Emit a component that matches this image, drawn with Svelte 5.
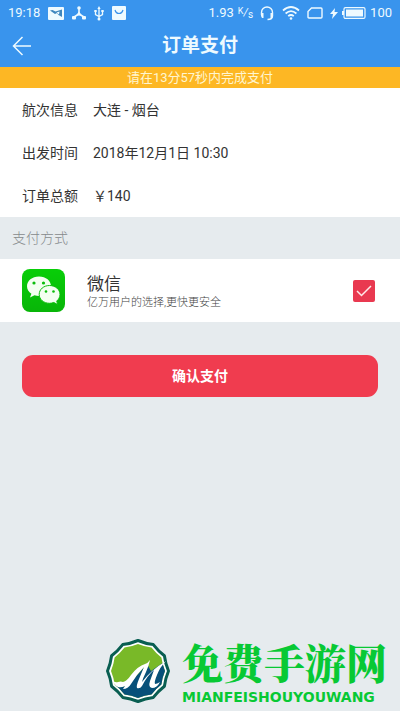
<script>
  const details = [
    { label: '航次信息', value: '大连 - 烟台' },
    { label: '出发时间', value: '2018年12月1日 10:30' },
    { label: '订单总额', value: '￥140' }
  ];
  let wechat = $state(true);

  // Twelve-sided badge whose sides bend slightly inwards.
  function badge(radius) {
    const point = (step, r) => {
      const angle = (step * Math.PI) / 6;
      return `${(33 + r * Math.sin(angle)).toFixed(1)} ${(32 - r * Math.cos(angle)).toFixed(1)}`;
    };
    let path = `M${point(0, radius)}`;
    for (let i = 1; i <= 12; i++) path += `Q${point(i - 0.5, radius * 0.93)} ${point(i, radius)}`;
    return path + 'Z';
  }
</script>

<div class="screen">
  <header>
    <div class="status">
      <div class="group left">
        <span>19:18</span>
        <svg width="16" height="13" viewBox="0 0 16 13"><rect width="16" height="13" rx="1" fill="#eefaff"/><path d="M2 3.500 4.500 3l3 1.500L14 2.500v7.500L10.500 8 9 6 7 7Z" fill="#3e86bd"/><path d="m8.500 5.500 3-1-.5 3Z" fill="#eefaff"/></svg>
        <svg width="14" height="14" viewBox="0 0 14 14" fill="none" stroke="#eefaff" stroke-width="1.6"><path d="M7 2v6L2 11M7 8l5 3"/><g fill="#eefaff" stroke="none"><circle cx="7" cy="2" r="1.800"/><rect y="10" width="4" height="3.500" rx="1"/><rect x="10" y="10" width="4" height="3.500" rx="1"/><path d="m7 5.500 3 4H4Z"/></g></svg>
        <svg width="10" height="15" viewBox="0 0 10 15" fill="none" stroke="#eefaff" stroke-width="1.3"><path d="M5 2v11M1.500 5v3.500L5 10.500l3.500-2V5"/><path d="M3.400 3 5 0l1.600 3ZM.3 4h2.400v2H.3ZM7.300 4h2.400v2H7.300Z" fill="#eefaff" stroke="none"/><circle cx="5" cy="13" r="1.500" fill="#eefaff" stroke="none"/></svg>
        <svg width="14" height="14" viewBox="0 0 14 14"><rect width="14" height="14" rx="1" fill="#eefaff"/><path d="M3 4q1 3.500 4 3.500T11 4" fill="none" stroke="#3992ea" stroke-width="1.2"/></svg>
      </div>
      <div class="group right">
        <span>1.93</span>
        <span class="unit"><sup>K</sup><i>/</i><sub>s</sub></span>
        <svg class="headset" width="14" height="15" viewBox="0 0 14 15" fill="none" stroke="#eefaff" stroke-width="1.4"><path d="M1.500 9V6.500a5.500 5.500 0 0 1 11 0V10q0 3.500-5 3.500"/><path d="M1 7h2.500v5H2L1 10ZM10.500 7H13v3l-1 2h-1.500Z" fill="#eefaff" stroke="none"/></svg>
        <svg class="wifi" width="18" height="14" viewBox="0 0 18 14" fill="none" stroke="#eefaff" stroke-width="1.7"><path d="M1 4.500q8-7 16 0M3.600 7.500q5.400-4.700 10.800 0M6.200 10.200q2.800-2.400 5.600 0"/><circle cx="9" cy="12.500" r="1.300" fill="#eefaff" stroke="none"/></svg>
        <svg class="sim" width="16" height="12" viewBox="0 0 16 12" fill="none" stroke="#eefaff" stroke-width="1.4"><path d="M4.500 1H14q1 0 1 1v8q0 1-1 1H2q-1 0-1-1V4.500Z"/></svg>
        <svg width="8" height="11" viewBox="0 0 8 11" fill="#eefaff"><path d="M5 0 0 6h3L2 11l6-7H4.500Z"/></svg>
        <svg width="24" height="12" viewBox="0 0 24 12"><path d="M0 4h2v4H0Z" fill="#eefaff"/><rect x="2" y=".6" width="21" height="10.800" rx="1.500" fill="none" stroke="#eefaff" stroke-width="1.200"/><rect x="4" y="2.500" width="17" height="7" fill="#eefaff"/></svg>
        <span>100</span>
      </div>
    </div>
    <nav>
      <button class="back" type="button" aria-label="返回">
        <svg width="20" height="20" viewBox="0 0 20 20" fill="none" stroke="#eefaff" stroke-width="1.5"><path d="M10.500 1 1.500 10l9 9M1.500 10H19"/></svg>
      </button>
      <h1>订单支付</h1>
    </nav>
  </header>
  <p class="timer">请在13分57秒内完成支付</p>
  <main>
    <dl>
      {#each details as item}
        <div class="row"><dt>{item.label}</dt><dd>{item.value}</dd></div>
      {/each}
    </dl>
    <h2>支付方式</h2>
    <label class="method">
      <svg width="43" height="43" viewBox="0 0 43 43">
        <defs><linearGradient id="green" x2="0" y2="1"><stop stop-color="#08ce08"/><stop offset="1" stop-color="#08b508"/></linearGradient></defs>
        <rect width="43" height="43" rx="8" fill="url(#green)"/>
        <path d="M17 7.500c-7 0-12 4.300-12 9.800 0 3.200 1.700 5.700 4.400 7.500L8 28.500l4.500-2.300q2.200.7 4.500.7c7 0 12-4.200 12-9.600S24 7.500 17 7.500Z" fill="#f4fff1"/>
        <path d="M27.500 16.500c-5.800 0-10.300 3.900-10.300 8.900s4.500 8.900 10.300 8.900q2.100 0 4.300-.8l4 2.100-1.100-3.500c2-1.700 3.300-4 3.300-6.700 0-5-4.700-8.900-10.500-8.900Z" fill="#f4fff1" stroke="#0bbd0b" stroke-width="1"/>
        <g fill="#0bbd0b"><circle cx="12" cy="14" r="1.600"/><circle cx="21.500" cy="14" r="1.600"/><circle cx="24" cy="22.500" r="1.300"/><circle cx="31.500" cy="22.500" r="1.300"/></g>
      </svg>
      <span class="name"><strong>微信</strong><small>亿万用户的选择,更快更安全</small></span>
      <input type="checkbox" bind:checked={wechat} />
      <span class="box" aria-hidden="true">
        {#if wechat}<svg width="16" height="12" viewBox="0 0 16 12" fill="none" stroke="#ffe9e9" stroke-width="1.500"><path d="m1 6 4.500 4.500L15 1"/></svg>{/if}
      </span>
    </label>
    <button class="confirm" type="button">确认支付</button>
  </main>
  <footer>
    <svg width="66" height="64" viewBox="0 0 66 64">
      <defs><clipPath id="inside"><path d={badge(27)}/></clipPath></defs>
      <path d={badge(30.5)} fill="#fff" stroke="#095e51" stroke-width="3" stroke-linejoin="round"/>
      <g clip-path="url(#inside)">
        <path d="M0 0h66v64H0Z" fill="#79b928"/>
        <path d="M8 46q12 4 18-3l16-18 4 7 20-14v46H0Z" fill="#075079"/>
      </g>
      <path d="M7 40q2 4 6 3 3-1 5 0 4-1 8-7 7-9 14-11 3-1 5-4-1 5-4 12-3 6-4 10Q46 31 61 22 55 28 52 36q-3 7-2 9 2 0 5-2-3 6-8 6-4-1-2-7l4-11Q42 37 37 47q-2 3-5 2-1-2 2-9l5-12q-7 7-13 17-3 5-8 5l2-3q-4 2-7 1-4-2-6-8Z" fill="#fff"/>
    </svg>
    <div class="brand"><b>免费手游网</b><span>MIANFEISHOUYOUWANG</span></div>
  </footer>
</div>

<style>
  :global(body) { margin: 0; background: #e6ebee; }
  .screen {
    display: flex;
    flex-direction: column;
    min-height: 100vh;
    background: #e6ebee;
    color: #333;
    font: 14px/20px Roboto, "Noto Sans CJK SC", sans-serif;
  }
  header { background: #3994ed; color: #eefaff; }
  svg { display: block; flex: none; }
  .status {
    display: flex;
    justify-content: space-between;
    padding: 2px 8px 0;
    font-size: 13px;
    height: 22px;
  }
  .group { display: flex; align-items: center; }
  .left { gap: 8px; }
  .right { gap: 4px; }
  .unit { display: flex; font-size: 9px; line-height: 12px; }
  .unit sup { align-self: flex-start; vertical-align: baseline; font-size: 9px; padding-bottom: 4px; }
  .unit i { font-size: 11px; padding-top: 2px; }
  .unit sub { font-size: 10px; padding-top: 4px; vertical-align: baseline; }
  .headset { margin: 0 4px 0 3px; }
  .wifi, .sim { margin: 0 3px 0 0; }
  nav {
    display: grid;
    grid-template-columns: 44px 1fr 44px;
    align-items: center;
    height: 43px;
  }
  .back { display: flex; justify-content: center; padding: 0; border: 0; background: none; }
  h1 { margin: 0; text-align: center; font-size: 19px; line-height: 28px; font-weight: 700; }
  .timer {
    margin: 0;
    background: #fdb724;
    color: #fff5cf;
    text-align: center;
    font-size: 13px;
    line-height: 21px;
  }
  dl { margin: 0; background: #fff; }
  .row { display: flex; align-items: center; gap: 15px; padding: 0 22px; height: 43px; }
  dt, dd { margin: 0; }
  h2 {
    margin: 0;
    padding: 0 12px;
    color: #85898b;
    font-size: 14px;
    line-height: 42px;
    font-weight: 300;
  }
  .method {
    position: relative;
    display: flex;
    align-items: center;
    gap: 22px;
    padding: 10px 25px 10px 22px;
    background: #fff;
  }
  .name { display: flex; flex: 1; flex-direction: column; padding-top: 2px; }
  strong { font-size: 17px; line-height: 22px; font-weight: 400; }
  small { color: #444; font-size: 11px; line-height: 16px; font-weight: 300; }
  input { position: absolute; right: 25px; width: 22px; height: 22px; margin: 0; opacity: 0; }
  .box {
    display: flex;
    align-items: center;
    justify-content: center;
    width: 22px;
    height: 22px;
    border-radius: 2px;
    background: #e93950;
  }
  .confirm {
    display: block;
    width: calc(100% - 44px);
    margin: 33px 22px 0;
    padding: 11px;
    border: 0;
    border-radius: 11px;
    background: #f03c4f;
    color: #fff;
    font: inherit;
    font-weight: 700;
  }
  footer {
    display: flex;
    align-items: center;
    justify-content: flex-end;
    gap: 11px;
    margin-top: auto;
    padding: 0 13px 5px 0;
    color: #08c934;
  }
  .brand { display: flex; flex-direction: column; }
  b {
    font: 900 41px/52px "Noto Serif CJK SC", "Noto Sans CJK SC", serif;
  }
  .brand span { font: 700 14px/18px "DejaVu Sans", sans-serif; }
</style>
